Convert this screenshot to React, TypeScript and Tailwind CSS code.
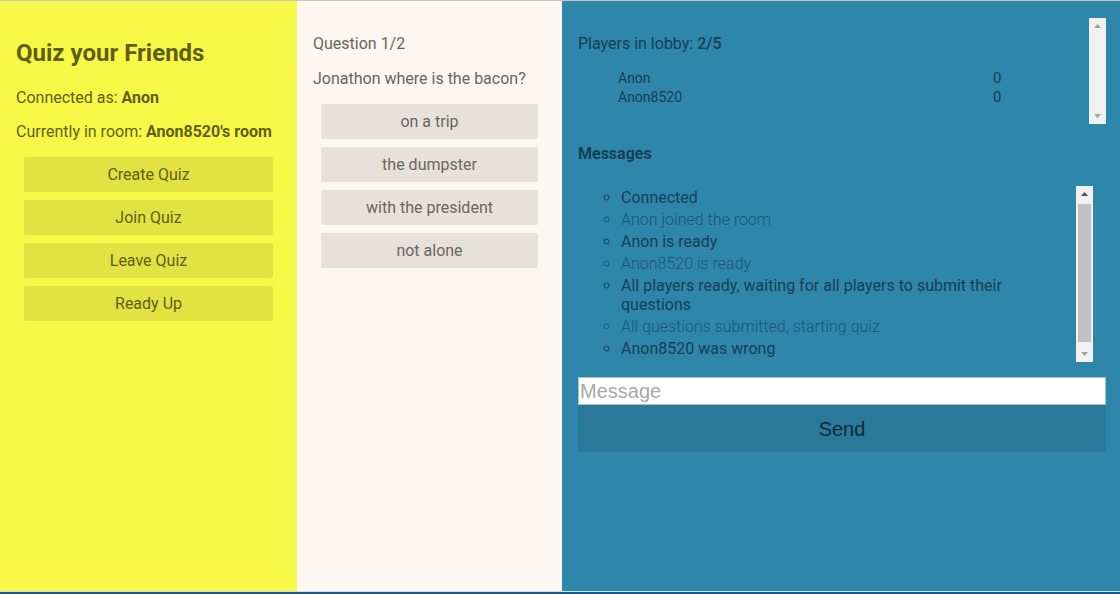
import React from "react";

const menu = ["Create Quiz", "Join Quiz", "Leave Quiz", "Ready Up"];
const answers = ["on a trip", "the dumpster", "with the president", "not alone"];
const players = [
  { name: "Anon", score: 0 },
  { name: "Anon8520", score: 0 },
];
const messages = [
  "Connected",
  "Anon joined the room",
  "Anon is ready",
  "Anon8520 is ready",
  "All players ready, waiting for all players to submit their questions",
  "All questions submitted, starting quiz",
  "Anon8520 was wrong",
];

function Arrow({ up, dark }: { up?: boolean; dark?: boolean }) {
  return (
    <svg width="7" height="4" viewBox="0 0 7 4" className="mx-auto">
      <polygon
        points={up ? "0,4 3.5,0 7,4" : "0,0 7,0 3.5,4"}
        fill={dark ? "#505050" : "#a3a3a3"}
      />
    </svg>
  );
}

function FakeScrollbar({ thumb }: { thumb?: boolean }) {
  return (
    <div className="w-[17px] flex flex-col bg-[#f1f1f1] py-[6px]">
      <Arrow up dark={thumb} />
      <div className="flex-1 px-[2px] pt-[8px] pb-[10px]">
        {thumb && <div className="h-full bg-[#c1c1c1]" />}
      </div>
      <Arrow />
    </div>
  );
}

export default function App() {
  return (
    <div className="w-[1120px] h-[594px] flex flex-col border-t border-[#c4c4c4] font-['Roboto',sans-serif] overflow-hidden">
      <div className="flex flex-1 min-h-0">
        {/* left */}
        <div className="w-[297px] bg-[#f8f847] text-[#5f5f14] pt-[39px]">
          <h2 className="px-4 text-[24px] leading-[26px] font-bold">Quiz your Friends</h2>
          <p className="px-4 mt-[22px] text-[16px] leading-[20px]">
            Connected as: <span className="font-bold">Anon</span>
          </p>
          <p className="px-4 mt-[14px] text-[16px] leading-[20px]">
            Currently in room: <span className="font-bold">Anon8520's room</span>
          </p>
          <div className="mt-[15px] px-6 flex flex-col gap-2">
            {menu.map((m, i) => (
              <button
                key={i}
                className="h-[35px] w-full rounded-[2px] bg-[#e2e243] text-[16px] text-[#5f5f14]"
              >
                {m}
              </button>
            ))}
          </div>
        </div>

        {/* middle */}
        <div className="w-[265px] bg-[#fef6f0] text-[#6b6560] pt-[33px]">
          <p className="px-4 text-[16px] leading-[20px]">Question 1/2</p>
          <p className="px-4 mt-[15px] text-[16px] leading-[20px]">Jonathon where is the bacon?</p>
          <div className="mt-[15px] px-6 flex flex-col gap-2">
            {answers.map((a, i) => (
              <button
                key={i}
                className="h-[35px] w-full rounded-[2px] bg-[#e7e1dc] text-[16px] text-[#6b6560]"
              >
                {a}
              </button>
            ))}
          </div>
        </div>

        {/* right */}
        <div className="flex-1 bg-[#2e86ab] pl-4 pr-[14px] pt-[17px] text-[#163f55]">
          <div className="h-[106px] flex">
            <div className="flex-1 pt-[16px]">
              <p className="text-[16px] leading-[20px]">
                Players in lobby: <span className="font-medium">2/5</span>
              </p>
              <div className="mt-[15px] pl-10">
                {players.map((p, i) => (
                  <div key={i} className="flex h-[19px] items-center">
                    <span className="w-[375px] text-[14px]">{p.name}</span>
                    <span className="text-[15px]">{p.score}</span>
                  </div>
                ))}
              </div>
            </div>
            <FakeScrollbar />
          </div>

          <p className="mt-[20px] text-[16px] leading-[20px] font-bold">Messages</p>

          <div className="mt-[22px] h-[176px] flex mr-[13px]">
            <ul className="flex-1 list-[circle] pl-[43px] pt-[2px] text-[16px] leading-[19px]">
              {messages.map((m, i) => (
                <li
                  key={i}
                  className={
                    "mb-[3px] max-w-[440px] " +
                    (i % 2 === 1 ? "font-light text-[#1a5676]" : "text-[#163f55]")
                  }
                >
                  {m}
                </li>
              ))}
            </ul>
            <FakeScrollbar thumb />
          </div>

          <input
            placeholder="Message"
            className="mt-[15px] block w-full h-[28px] bg-white border border-[#9cc3d5] px-[1px] font-['Liberation_Sans',Arial,sans-serif] text-[20px] text-black placeholder:text-[#a9a9a9] outline-none"
          />
          <button className="block w-full h-[47px] bg-[#2a789a] font-['Liberation_Sans',Arial,sans-serif] text-[20px] text-[#0d2a3b]">
            Send
          </button>
        </div>
      </div>
      <div className="h-[3px] bg-[#1d5785] border-t border-[#cfe0ea]" />
    </div>
  );
}
